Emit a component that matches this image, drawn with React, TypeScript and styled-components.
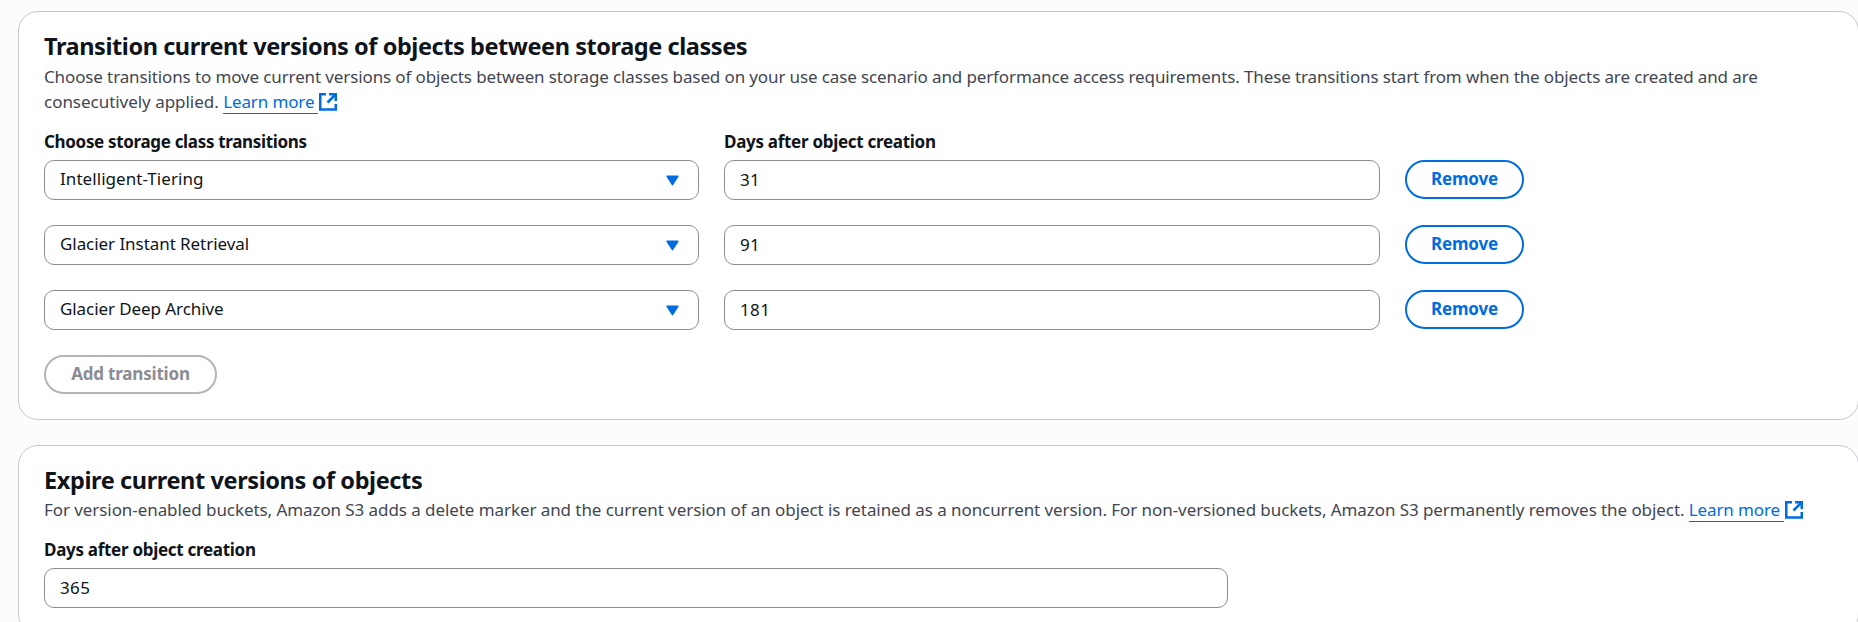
import React from 'react';
import styled, { createGlobalStyle } from 'styled-components';

const color = {
  page: '#fcfcfd',
  card: '#ffffff',
  cardBorder: '#c6c6cd',
  heading: '#0f141a',
  body: '#424650',
  link: '#006ce0',
  fieldBorder: '#8c8c94',
  disabledBorder: '#b4b4bb',
  disabledText: '#8c8c94',
};

const GlobalStyle = createGlobalStyle`
  * { box-sizing: border-box; }
  html, body { margin: 0; height: 622px; overflow: hidden; }
  body {
    background: ${color.page};
    color: ${color.heading};
    font-family: "Noto Sans", sans-serif;
    font-size: 17px;
    line-height: 25px;
  }
`;

const Page = styled.main`
  display: flex;
  flex-direction: column;
  gap: 25px;
  width: 1859px;
  padding: 11px 0 0 18px;
`;

const Card = styled.section`
  display: flex;
  flex-direction: column;
  padding: 19px 25px 25px;
  background: ${color.card};
  border: 1px solid ${color.cardBorder};
  border-radius: 20px;
`;

const Title = styled.h2<{ $track: number }>`
  margin: 0;
  font-size: 23.5px;
  line-height: 30px;
  font-weight: 700;
  letter-spacing: ${(p) => p.$track}px;
`;

const Description = styled.p<{ $gap: number; $track: number }>`
  margin: ${(p) => p.$gap}px 0 14.5px;
  color: ${color.body};
  letter-spacing: ${(p) => p.$track}px;
`;

const DescriptionLine = styled.span<{ $track: number }>`
  letter-spacing: ${(p) => p.$track}px;
`;

const LinkText = styled.a`
  color: ${color.link};
  letter-spacing: -0.12px;
  text-decoration: none;
  white-space: nowrap;
`;

const Underlined = styled.span`
  padding: 0 4px 0 0;
  border-bottom: 1px solid ${color.link};
`;

const ExternalIcon = styled.svg`
  display: inline-block;
  width: 18px;
  height: 18px;
  margin-left: 1px;
  vertical-align: -3px;
`;

const Columns = styled.div`
  display: grid;
  grid-template-columns: 655px 656px auto;
  justify-content: start;
  column-gap: 25px;
`;

const Rows = styled.div`
  display: flex;
  flex-direction: column;
  gap: 25px;
  margin-bottom: 25px;
`;

const Label = styled.label<{ $track?: number }>`
  display: block;
  margin-bottom: 6.5px;
  font-weight: 700;
  letter-spacing: ${(p) => p.$track ?? -0.29}px;
`;

const Field = styled.div<{ $width?: number; $lift?: number; $track?: number }>`
  display: flex;
  align-items: center;
  justify-content: space-between;
  width: ${(p) => (p.$width ? `${p.$width}px` : '100%')};
  height: 40px;
  padding: 0 19px ${(p) => p.$lift ?? 0}px 15px;
  border: 1px solid ${color.fieldBorder};
  border-radius: 10px;
  letter-spacing: ${(p) => p.$track ?? 0.35}px;
`;

const Caret = styled.svg`
  width: 13px;
  height: 11px;
  margin-top: 3px;
`;

const Button = styled.button<{ $disabled?: boolean; $width: number }>`
  justify-self: start;
  align-self: start;
  width: ${(p) => p.$width}px;
  height: 39px;
  padding: 0 0 2px;
  border: 2px solid ${(p) => (p.$disabled ? color.disabledBorder : color.link)};
  border-radius: 20px;
  background: transparent;
  color: ${(p) => (p.$disabled ? color.disabledText : color.link)};
  font-family: inherit;
  font-size: 17px;
  line-height: 25px;
  font-weight: 700;
  letter-spacing: -0.2px;
`;

function LearnMore() {
  return (
    <LinkText>
      <Underlined>Learn more</Underlined>
      <ExternalIcon viewBox="0 0 18 18" fill="none" stroke={color.link} strokeWidth="2.5">
        <path d="M7 1.25H1.25V16.5H16.75V11" />
        <path d="M10 1.25H16.75V8" />
        <path d="M16.5 1.5L8.5 9.5" />
      </ExternalIcon>
    </LinkText>
  );
}

const transitions = [
  { storageClass: 'Intelligent-Tiering', days: '31', track: 0.06 },
  { storageClass: 'Glacier Instant Retrieval', days: '91', track: -0.06 },
  { storageClass: 'Glacier Deep Archive', days: '181', track: -0.08 },
];

export default function App() {
  return (
    <>
      <GlobalStyle />
      <Page>
        <Card>
          <Title $track={-0.43}>Transition current versions of objects between storage classes</Title>
          <Description $gap={3} $track={-0.122}>
            Choose transitions to move current versions of objects between storage classes based on your use
            case scenario and performance access requirements. These transitions start from when the objects are
            created and are
            <br />
            <DescriptionLine $track={-0.03}>consecutively applied. </DescriptionLine>
            <LearnMore />
          </Description>
          <Columns>
            <Label $track={-0.33}>Choose storage class transitions</Label>
            <Label>Days after object creation</Label>
          </Columns>
          <Rows>
            {transitions.map((t) => (
              <Columns key={t.storageClass}>
                <Field $lift={3} $track={t.track}>
                  {t.storageClass}
                  <Caret viewBox="0 0 13 11">
                    <path
                      d="M1.2 1.2H11.8L6.5 9.6Z"
                      fill={color.link}
                      stroke={color.link}
                      strokeWidth="1.6"
                      strokeLinejoin="round"
                    />
                  </Caret>
                </Field>
                <Field $lift={1}>{t.days}</Field>
                <Button $width={119}>Remove</Button>
              </Columns>
            ))}
          </Rows>
          <Button $disabled $width={173}>Add transition</Button>
        </Card>
        <Card>
          <Title $track={-0.39}>Expire current versions of objects</Title>
          <Description $gap={2} $track={-0.075}>
            For version-enabled buckets, Amazon S3 adds a delete marker and the current version of an object is
            retained as a noncurrent version. For non-versioned buckets, Amazon S3 permanently removes the
            object. <LearnMore />
          </Description>
          <Label>Days after object creation</Label>
          <Field $width={1184} $lift={1}>365</Field>
        </Card>
      </Page>
    </>
  );
}
